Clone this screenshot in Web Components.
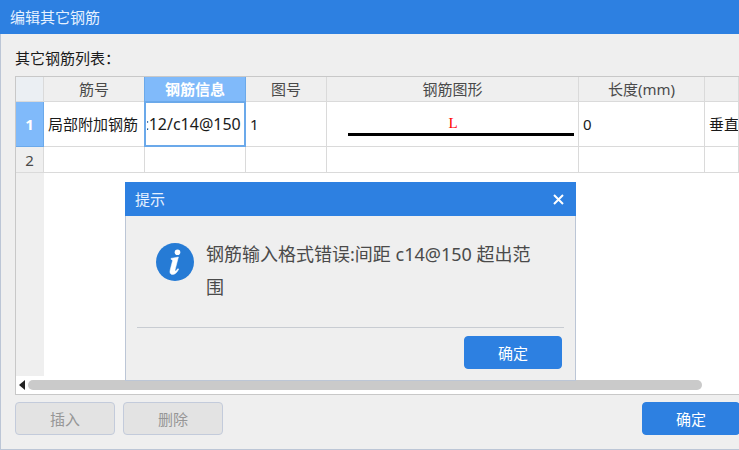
<!DOCTYPE html>
<html lang="zh-CN">
<head>
<meta charset="utf-8">
<meta name="viewport" content="width=device-width, initial-scale=1">
<title>编辑其它钢筋</title>
<style>
    html, body {
        height: 100%;
    }
    body {
        --primary: #2d80e1;
        --selected: #80bafa;
        --selected-border: #6ba9ea;
        --surface: #efefef;
        --frame: #bcc6d6;
        --line: #dadada;
        margin: 0;
        overflow: hidden;
        font: 15px/20px "Noto Sans", "Noto Sans CJK SC", sans-serif;
        color: #1a1a1a;
    }
</style>
</head>
<body>
<app-window heading="编辑其它钢筋">
    <rebar-grid></rebar-grid>
    <action-button slot="tools" disabled>插入</action-button>
    <action-button slot="tools" disabled>删除</action-button>
    <action-button slot="confirm" primary>确定</action-button>
</app-window>
<message-dialog heading="提示">钢筋输入格式错误:间距 c14@150 超出范围</message-dialog>

<script>
class TitleBar extends HTMLElement {

    constructor() {
        super();
        this.attachShadow({ mode: "open" });
        this.shadowRoot.innerHTML = `
        <style>
            :host {
                display: flex;
                align-items: center;
                justify-content: space-between;
                flex: none;
                height: 34px;
                padding: 0 10px;
                box-sizing: border-box;
                background-color: var(--primary);
                color: #e6f1ff;
            }
            h1 {
                margin: 0;
                font-size: 15px;
                font-weight: 400;
            }
        </style>
        <h1></h1>
        <slot></slot>
        `
    }

    connectedCallback() {
        this.shadowRoot.querySelector("h1").textContent = this.getAttribute("heading");
    }
}

class ActionButton extends HTMLElement {

    constructor() {
        super();
        this.attachShadow({ mode: "open" });
        this.shadowRoot.innerHTML = `
        <style>
            :host {
                display: block;
            }
            button {
                display: block;
                width: 100px;
                height: 33px;
                padding: 0;
                border: 1px solid #c3cbdb;
                border-radius: 4px;
                background-color: #e3e3e3;
                color: #969696;
                font: inherit;
            }
            :host([primary]) button {
                width: 98px;
                border-color: var(--primary);
                background-color: var(--primary);
                color: #fff;
            }
        </style>
        <button type="button"><slot></slot></button>
        `
    }

    connectedCallback() {
        this.shadowRoot.querySelector("button").disabled = this.hasAttribute("disabled");
    }
}

class RebarGrid extends HTMLElement {

    constructor() {
        super();
        this.attachShadow({ mode: "open" });
        this.shadowRoot.innerHTML = `
        <style>
            :host {
                display: flex;
                flex-direction: column;
                flex: 1;
                min-height: 0;
                overflow: hidden;
                border: 1px solid #c8c8c8;
                background-color: #fff;
            }
            .rows {
                flex: 1;
                min-height: 0;
                overflow: hidden;
                background: linear-gradient(var(--surface), var(--surface)) 0 0 / 28px 100% no-repeat;
            }
            table {
                width: 100%;
                min-width: 720px;
                table-layout: fixed;
                border-spacing: 0;
            }
            th, td {
                box-sizing: border-box;
                padding: 0;
                border-right: 1px solid var(--line);
                border-bottom: 1px solid var(--line);
                white-space: nowrap;
                overflow: hidden;
            }
            th {
                background-color: var(--surface);
                color: #4a4a4a;
                font-weight: 400;
            }
            td {
                padding-left: 4px;
                text-align: left;
            }
            .corner {
                background-color: #ebeff3;
            }
            thead tr {
                height: 25px;
            }
            .tall {
                height: 45px;
            }
            .short {
                height: 26px;
            }
            .selected {
                position: relative;
                border-color: var(--selected-border);
                background-color: var(--selected);
                color: #fff;
                font-weight: 700;
            }
            thead .selected {
                box-shadow: -1px 0 var(--selected-border);
            }
            .editing {
                position: relative;
                padding: 0 4px 0 2px;
                border-color: var(--selected-border);
                box-shadow: inset 0 0 0 1px var(--selected-border), -1px 0 var(--selected-border);
            }
            input {
                display: block;
                box-sizing: border-box;
                width: 100%;
                padding: 0;
                border: 0;
                outline: 0;
                background: none;
                color: inherit;
                font: inherit;
                font-size: 16px;
            }
            .shape {
                margin: 0 4px 0 17px;
                padding-right: 16px;
                border-bottom: 3px solid #000;
                color: #f00;
                font: 15px/20px "Liberation Serif", serif;
                text-align: center;
            }
            .scrollbar {
                display: flex;
                align-items: center;
                flex: none;
                height: 18px;
            }
            .scrollbar button {
                display: flex;
                justify-content: center;
                width: 12px;
                padding: 0;
                border: 0;
                background: none;
            }
            .thumb {
                width: calc(100% - 49px);
                height: 10px;
                border-radius: 5px;
                background-color: #cacaca;
            }
        </style>
        <div class="rows">
            <table aria-label="其它钢筋列表">
                <colgroup>
                    <col style="width: 28px">
                    <col style="width: 101px">
                    <col style="width: 101px">
                    <col style="width: 81px">
                    <col style="width: 252px">
                    <col style="width: 126px">
                    <col>
                </colgroup>
                <thead>
                    <tr>
                        <th class="corner"></th>
                        <th>筋号</th>
                        <th class="selected">钢筋信息</th>
                        <th>图号</th>
                        <th>钢筋图形</th>
                        <th>长度(mm)</th>
                        <th></th>
                    </tr>
                </thead>
                <tbody></tbody>
            </table>
        </div>
        <div class="scrollbar">
            <button type="button" aria-label="向左滚动">
                <svg width="6" height="10" viewBox="0 0 6 10"><path d="M6 0v10L0 5z" fill="#222"/></svg>
            </button>
            <div class="thumb"></div>
        </div>
        `
    }

    connectedCallback() {
        this.shadowRoot.querySelector("tbody").innerHTML = `
                    <tr class="tall">
                        <th class="selected">1</th>
                        <td>局部附加钢筋</td>
                        <td class="editing"><input type="text" value="c12/c14@150" aria-label="钢筋信息"></td>
                        <td>1</td>
                        <td><div class="shape">L</div></td>
                        <td>0</td>
                        <td>垂直</td>
                    </tr>
                    <tr class="short">
                        <th>2</th>
                        <td></td><td></td><td></td><td></td><td></td><td></td>
                    </tr>
        `
        // keep the end of a long value in view
        let editor = this.shadowRoot.querySelector("input");
        editor.scrollLeft = editor.scrollWidth;
    }
}

class AppWindow extends HTMLElement {

    constructor() {
        super();
        this.attachShadow({ mode: "open" });
        this.shadowRoot.innerHTML = `
        <style>
            :host {
                display: flex;
                flex-direction: column;
                width: calc(100% + 16px);
                height: 100%;
                background-color: var(--surface);
            }
            main {
                display: flex;
                flex-direction: column;
                flex: 1;
                min-height: 0;
                padding: 14px;
                border: 1px solid var(--frame);
                border-top: 0;
            }
            .label {
                margin: 0 0 8px;
            }
            footer {
                display: flex;
                justify-content: space-between;
                margin-top: 7px;
            }
            .tools {
                display: flex;
                gap: 8px;
            }
        </style>
        <title-bar heading="${this.getAttribute("heading")}"></title-bar>
        <main>
            <p class="label">其它钢筋列表：</p>
            <slot></slot>
            <footer>
                <div class="tools"><slot name="tools"></slot></div>
                <slot name="confirm"></slot>
            </footer>
        </main>
        `
    }
}

class MessageDialog extends HTMLElement {

    constructor() {
        super();
        this.attachShadow({ mode: "open" });
        this.shadowRoot.innerHTML = `
        <style>
            :host {
                position: absolute;
                top: 182px;
                left: 125px;
                width: 451px;
                background-color: var(--surface);
            }
            .close {
                display: flex;
                padding: 2px;
                border: 0;
                background: none;
            }
            .body {
                padding: 0 11px 11px;
                border: 1px solid var(--frame);
                border-top: 0;
            }
            .message {
                display: flex;
                gap: 12px;
                padding: 22px 26px 23px 19px;
                border-bottom: 1px solid #c8ccd2;
            }
            .message svg {
                flex: none;
                margin-top: 5px;
            }
            p {
                margin: 0;
                color: #4a4a4a;
                font-size: 18px;
                line-height: 33px;
            }
            .actions {
                display: flex;
                justify-content: flex-end;
                padding: 8px 2px 0;
            }
        </style>
        <title-bar heading="${this.getAttribute("heading")}">
            <button class="close" type="button" aria-label="关闭">
                <svg width="11" height="11" viewBox="0 0 11 11"><path d="M1 1l9 9M10 1l-9 9" stroke="#fff" stroke-width="2"/></svg>
            </button>
        </title-bar>
        <div class="body">
            <div class="message">
                <svg width="38" height="38" viewBox="0 0 38 38">
                    <circle cx="19" cy="19" r="19" fill="#267bd5"/>
                    <circle cx="21.5" cy="9.3" r="2.8" fill="#fff"/>
                    <path d="M15 15.4L22.4 14l-3.3 12.8c-.3 1.300.3 1.500 1.100.8l1.700-2 .8.6c-1.700 3.400-3.900 5.300-6.200 5.300-2.200 0-3-1.700-2.400-4.200l2.300-9c.3-1.300-.1-1.900-1.400-1.900z" fill="#fff" stroke="#fff" stroke-width=".5"/>
                </svg>
                <p><slot></slot></p>
            </div>
            <div class="actions"><action-button primary>确定</action-button></div>
        </div>
        `
    }

    connectedCallback() {
        this.setAttribute("role", "dialog");
        this.setAttribute("aria-label", this.getAttribute("heading"));
    }
}

window.customElements.define("title-bar", TitleBar);
window.customElements.define("action-button", ActionButton);
window.customElements.define("rebar-grid", RebarGrid);
window.customElements.define("app-window", AppWindow);
window.customElements.define("message-dialog", MessageDialog);
</script>
</body>
</html>
